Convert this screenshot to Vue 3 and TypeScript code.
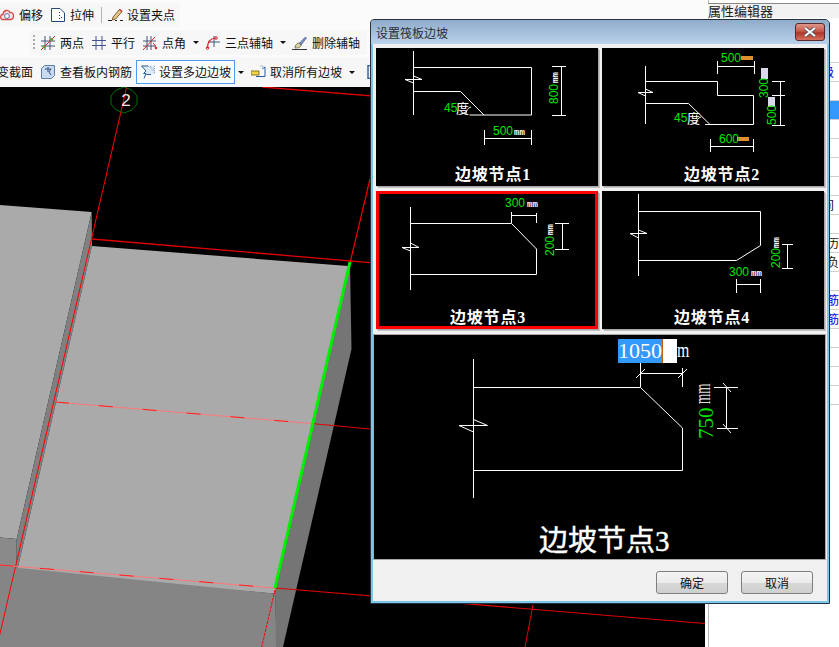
<script setup lang="ts">
interface Label { x: number; y: number; t: string; c: string; rot?: boolean }
interface Panel { title: string; tx: number; sel?: boolean; d: string; labels: Label[]; extra?: string; extraRot?: string }

const panels: Panel[] = [
  {
    title: '边坡节点1', tx: 79,
    d: 'M37.5 3V67M37.5 19.5H155.5V67H93.5M37.5 43.5H84.5L108 67M29 31.5H46L37.5 28M29 31.5L37.5 35M176 18.5H190M176 67.5H190M185.5 18.5V67.5M108.5 82V97M155.5 82V97M108.5 90.5H155.5M90 67C90 62 92 60 95 59',
    labels: [
      { x: 68, y: 64, t: '45', c: 'g' }, { x: 80, y: 65, t: '度', c: 'w' },
      { x: 117, y: 87, t: '500', c: 'g' }, { x: 138, y: 87, t: 'mm', c: 'm' },
      { x: 182, y: 56, t: '800', c: 'g', rot: true }, { x: 182, y: 35, t: 'mm', c: 'm', rot: true },
    ],
  },
  {
    title: '边坡节点2', tx: 82,
    d: 'M43.5 18V76M43.5 33.5H115.5V47.5H151.5V76.5H103M43.5 55.5H86.5L108 76.5M36 44.5H51L43.5 41M36 44.5L43.5 48M115.5 13V26M152.5 13V26M115.5 18.5H152.5M170 33.5H183M170 47.5H183M170 77.5H183M178.5 33.5V77.5M108.5 91V104M151.5 91V104M108.5 98.5H151.5M94 76C94 72 96 70 99 69',
    labels: [
      { x: 72, y: 74, t: '45', c: 'g' }, { x: 85, y: 75, t: '度', c: 'w' },
      { x: 119, y: 14, t: '500', c: 'g' }, { x: 117, y: 95, t: '600', c: 'g' },
      { x: 166, y: 50, t: '300', c: 'g', rot: true }, { x: 174, y: 77, t: '500', c: 'g', rot: true },
    ],
    extra: 'M139 8h12v4h-12zM135 89h12v4h-12z',
    extraRot: 'M159 20h7v11h-7zM166 49h7v10h-7z',
  },
  {
    title: '边坡节点3', tx: 74, sel: true,
    d: 'M34.5 16V99M34.5 32.5H135.5L160.5 58V83.5H34.5M135.5 21V32M160.5 22V32M135.5 24.5H160.5M179 32.5H193M179 58.5H193M186.5 32.5V58.5M26 56.5H43L34.5 52M26 56.5L34.5 60',
    labels: [
      { x: 129, y: 16, t: '300', c: 'g' }, { x: 151, y: 16, t: 'mm', c: 'm' },
      { x: 178, y: 65, t: '200', c: 'g', rot: true }, { x: 177, y: 44, t: 'mm', c: 'm', rot: true },
    ],
  },
  {
    title: '边坡节点4', tx: 72,
    d: 'M36.5 3V85M36.5 20.5H158.5V54.5L134.5 69.5H36.5M28 42.5H45L36.5 39M28 42.5L36.5 47M134.5 88V102M158.5 88V102M134.5 93.5H158.5M180 53.5H191M180 77.5H191M185.5 53.5V77.5',
    labels: [
      { x: 127, y: 85, t: '300', c: 'g' }, { x: 149, y: 85, t: 'mm', c: 'm' },
      { x: 178, y: 77, t: '200', c: 'g', rot: true }, { x: 177, y: 57, t: 'mm', c: 'm', rot: true },
    ],
  },
];

const props = [
  { t: '' }, { t: '级', cls: 'blue' }, { t: '' }, { t: '', cls: 'hl' }, { t: '' }, { t: ')', cls: 'near' }, { t: '' }, { t: '' },
  { t: '间' }, { t: '' }, { t: '历', cls: 'far' }, { t: '负', cls: 'far' }, { t: '' },
  { t: '筋', cls: 'blue far' }, { t: '筋', cls: 'blue far' }, { t: '' }, { t: '' }, { t: '' }, { t: '' },
];
</script>

<template>
  <div class="page">
    <div class="left">
      <header class="toolbar">
        <div class="row r1">
          <span class="tool">
            <svg viewBox="0 0 14 14" class="ic"><path d="M2 11.5C-.5 10 .5 6.5 3 6.5 3.5 2 8.500 1 9.800 4.500c2.500-.5 4 1.500 3.700 4-.3 2-1.500 3-3 3z" fill="#fbe3e0" stroke="#d8474a" stroke-width="1.300"/><circle cx="7" cy="8" r="2.400" fill="#fff" stroke="#4a6fa8"/></svg>
            偏移
          </span>
          <span class="tool">
            <svg viewBox="0 0 14 14" class="ic"><path d="M.5.500H9L13.500 5V13.500H.5z" fill="#fff" stroke="#24477c"/><path d="M8.500 4v1M8.500 7v1M10.500 9v1M8.500 10v1" stroke="#333"/></svg>
            拉伸
          </span>
          <i class="sep"></i>
          <span class="tool t4">
            <svg viewBox="0 0 15 14" class="ic w15"><path d="M0 12.500h4M7 12.500h2M12 12.500h3" stroke="#222"/><path d="M5 9L11.500 1.500 14 3.500 7.500 11 4.500 12z" fill="#e9c98a" stroke="#7a5a2a"/><path d="M11.500 1.500L14 3.500" stroke="#c33" stroke-width="1.500"/></svg>
            设置夹点
          </span>
        </div>
        <div class="row r2">
          <i class="grip"></i>
          <span class="tool">
            <svg viewBox="0 0 14 14" class="ic"><path d="M4 0V14M9 0V14M0 5H14M0 10H14" stroke="#44557f"/><path d="M0 14L14 0" stroke="#d22"/><circle cx="3" cy="11" r="1.600" fill="#6a9a2a"/><circle cx="10.500" cy="3.500" r="1.600" fill="#6a9a2a"/></svg>
            两点
          </span>
          <span class="tool">
            <svg viewBox="0 0 14 14" class="ic"><path d="M4 0V14M10 0V14M0 4.500H14M0 9.500H14" stroke="#44508f"/></svg>
            平行
          </span>
          <span class="tool t4">
            <svg viewBox="0 0 15 14" class="ic w15"><path d="M4 0V14M8 0V14M0 5H13M0 10H13" stroke="#44557f"/><path d="M0 14L12 1" stroke="#d22"/><path d="M10 7c1.500 1 2.500 3 2.500 6" stroke="#d22" fill="none"/><circle cx="13" cy="12" r="1.200" fill="#d22"/></svg>
            点角
          </span>
          <i class="caret"></i>
          <span class="tool">
            <svg viewBox="0 0 15 14" class="ic w15"><path d="M9 0V11M3 6H15" stroke="#44557f"/><path d="M2.500 12C2.500 6 5 2.500 10.500 2" stroke="#d22" fill="none" stroke-width="1.200"/><circle cx="2.500" cy="12" r="1.300" fill="none" stroke="#d22"/><circle cx="11" cy="2" r="1.300" fill="none" stroke="#d22"/></svg>
            三点辅轴
          </span>
          <i class="caret"></i>
          <span class="tool">
            <svg viewBox="0 0 15 14" class="ic w15"><path d="M0 13.500h15" stroke="#333"/><path d="M3 12c0-3 2-5 4-5l2 2c0 2-2 3-6 3z" fill="#d9d2a8" stroke="#7f7a50"/><path d="M7.500 7L13.500 1l1 1L9 9z" fill="#7a8fc4" stroke="#4a5a8c" stroke-width=".7"/></svg>
            删除辅轴
          </span>
        </div>
        <div class="row r3">
          <span class="plain cut">变截面</span>
          <span class="tool">
            <svg viewBox="0 0 14 14" class="ic"><path d="M.5 3.500L3.500.5H13.500V10.500L10.500 13.500H.5z" fill="#c8daf0" stroke="#5e80ac"/><path d="M4 4h6l-2 3 2 3M7 2v5" stroke="#34507c" fill="none"/></svg>
            查看板内钢筋
          </span>
          <span class="tool active">
            <svg viewBox="0 0 14 14" class="ic"><path d="M0 .5L5 5.500 2.500 8.500 4 9 3 13.500 5.500 9.500H13.500V.5z" fill="#dfeaf7"/><path d="M.5 1L5 6 2.500 8.500H5L3 13.500M.5 1H7M5.500 9.500H10" fill="none" stroke="#2a5a9a"/><path d="M7 1l6.500 6M9 1l4.500 4M13.500 1v8" fill="none" stroke="#7f9fc8" stroke-dasharray="1 1"/></svg>
            设置多边边坡
          </span>
          <i class="caret c3"></i>
          <span class="tool t4">
            <svg viewBox="0 0 15 14" class="ic w15"><path d="M0 6h8v4H0z" fill="#f0d24a" stroke="#8a7a20"/><path d="M5 11.500H14V2L11 4" fill="none" stroke="#2a5a9a"/><path d="M9 1h3v3" stroke="#a8bcd8" fill="none"/></svg>
            取消所有边坡
          </span>
          <i class="caret c4"></i>
          <svg viewBox="0 0 8 14" class="ic w8"><path d="M5 .5H1V13.500H7" fill="none" stroke="#2a5a9a" stroke-width="1.400"/></svg>
        </div>
      </header>
      <svg class="canvas" viewBox="0 87 705 560">
        <polygon points="0,205 91.700,212 16.700,539 0,537.500" fill="#aaaaaa"/>
        <polygon points="91.700,212 92,246 16.700,572.600 16.700,539" fill="#808080"/>
        <polygon points="0,537.500 16.700,539 16.700,572.600 0,566" fill="#8a8a8a"/>
        <polygon points="92,246 348.300,266 275,593.600 16.700,572.600" fill="#aaaaaa"/>
        <polygon points="0,566 275,593.600 277,647 0,647" fill="#858585"/>
        <polygon points="350,264 351.500,349 283,647 276,647 275,593.600" fill="#757575"/>
        <line x1="126.700" y1="87" x2="-1.500" y2="640" stroke="#ff0000"/>
        <line x1="92" y1="239" x2="370" y2="262.600" stroke="#e00000" stroke-width="1.300"/>
        <line x1="262" y1="87" x2="705" y2="123" stroke="#e00000" stroke-width="1.300"/>
        <line x1="370" y1="179" x2="350" y2="263" stroke="#ee0000" stroke-width="1.200"/>
        <line x1="275" y1="590" x2="261.700" y2="647" stroke="#ff0000" stroke-dasharray="3 1"/>
        <line x1="55" y1="402" x2="312.700" y2="423.600" stroke="#ff7777"/>
        <line x1="55" y1="402" x2="312.700" y2="423.600" stroke="#ff2020" stroke-dasharray="14 30"/>
        <line x1="312.700" y1="423.600" x2="370" y2="429" stroke="#e00000"/>
        <line x1="0" y1="565" x2="275" y2="588" stroke="#ff7777"/>
        <line x1="0" y1="565" x2="275" y2="588" stroke="#ff2020" stroke-dasharray="14 26"/>
        <line x1="275" y1="588" x2="705" y2="623.500" stroke="#e00000" stroke-width="1.200"/>
        <line x1="533" y1="605" x2="525" y2="647" stroke="#dd0000"/>
        <line x1="350" y1="262" x2="275" y2="588" stroke="#00f000" stroke-width="3"/>
        <polygon points="124,87 132,90 137,96 137,104 132,110 124,113 116,110 111,104 111,96 116,90" fill="none" stroke="#006e00"/>
        <text x="126" y="106" class="axis">2</text>
      </svg>
    </div>
    <i class="split"></i>
    <aside class="props">
      <div class="props-head">属性编辑器</div>
      <div class="props-rows">
        <div v-for="(p, i) in props" :key="i" class="prop" :class="p.cls">{{ p.t }}</div>
      </div>
    </aside>

    <section class="dialog">
      <div class="titlebar">
        <span>设置筏板边坡</span>
        <button class="close" type="button">
          <svg viewBox="0 0 14 10" width="14" height="10"><path d="M2 1l10 8M12 1L2 9" stroke="#50585f" stroke-width="3.600"/><path d="M2 1l10 8M12 1L2 9" stroke="#fff" stroke-width="2"/></svg>
        </button>
      </div>
      <div class="body">
        <div class="grid">
          <div v-for="p in panels" :key="p.title" class="panel" :class="{ sel: p.sel }">
            <svg viewBox="0 0 222 138" class="draw">
              <path :d="p.d" class="ln"/>
              <path v-if="p.extra" :d="p.extra" fill="#e0902c"/>
              <path v-if="p.extraRot" :d="p.extraRot" fill="#d8d8e8"/>
              <text
                v-for="l in p.labels"
                :key="l.t + l.x"
                :x="l.x"
                :y="l.y"
                :class="l.c"
                :transform="l.rot ? `rotate(-90 ${l.x} ${l.y})` : undefined"
              >{{ l.t }}</text>
              <text :x="p.tx" y="132" class="ttl">{{ p.title }}</text>
            </svg>
          </div>
        </div>
        <div class="large">
          <svg viewBox="0 0 451 224" class="draw">
            <path class="ln" d="M99.500 24V163M99.500 52.500H266.500L308.500 93V135.500H99.500M85 90.500H113.500L99.500 84.500M85 90.500L99.500 97M266.500 27V52M308.500 33V52M266.500 38.500H308.500M262 43L271 34M304 43L313 34M340 52.500H364M343 93.500H364M352.500 52.500V93.500M349 48L357 57M349 89L357 98"/>
            <text class="big-m" transform="translate(303 22) scale(.72 1)">m</text>
            <text x="339" y="104" class="big-g" transform="rotate(-90 339 104)">750</text>
            <text class="big-w" transform="translate(336 69) rotate(-90) scale(.55 1)">mm</text>
            <text x="165" y="216" class="big-t">边坡节点3</text>
          </svg>
          <div class="edit"><span class="selected">1050</span></div>
        </div>
        <footer class="foot">
          <button type="button" class="btn">确定</button>
          <button type="button" class="btn">取消</button>
        </footer>
      </div>
    </section>
  </div>
</template>

<style>
html, body { margin: 0; background: #fff; }
</style>

<style scoped>
.page {
  position: relative; width: 839px; height: 647px; overflow: hidden; display: flex;
  font-family: "Noto Sans CJK SC", "Liberation Sans", sans-serif; font-size: 12px; color: #111; background: #fff;
}
.left { width: 705px; flex: none; display: flex; flex-direction: column; }
.toolbar { height: 87px; flex: none; background: #fbfbfb; padding-top: 3px; box-sizing: border-box; }
.row { display: flex; align-items: center; gap: 8px; overflow: hidden; white-space: nowrap; background: #f7f7f7; box-sizing: border-box; }
.r1 { width: 180px; height: 24px; }
.r2 { width: 337px; height: 25px; margin: 3px 0 0 30px; padding-left: 3px; }
.r3 { height: 30px; margin-top: 2px; }
.tool { display: inline-flex; align-items: center; gap: 5px; line-height: 14px; }
.t4 { gap: 4px; }
.plain { line-height: 14px; }
.cut { margin-left: -3px; }
.ic { width: 14px; height: 14px; flex: none; }
.w15 { width: 15px; }
.w8 { width: 8px; margin-left: 3px; }
.sep { width: 1px; height: 16px; background: #b5b5b5; margin: 0 -2px 0 -1px; }
.grip { width: 2px; height: 16px; margin-right: -2px; background: repeating-linear-gradient(#aaa 0 2px, transparent 2px 4px); }
.caret { width: 0; height: 0; margin: 0 -2px 0 -1px; border: 3px solid transparent; border-top: 3px solid #111; border-bottom: 0; }
.active { gap: 4px; margin-left: -4px; padding: 0 3px 0 4px; border: 1px solid #4a9df0; background: #fafcff; height: 22px; }
.c3 { margin-left: -5px; margin-right: -1px; }
.c4 { margin-left: -1px; margin-right: 1px; }
.canvas { width: 705px; height: 560px; display: block; background: #000; }
.axis { font: 17px "Liberation Sans", sans-serif; fill: #e8e8e8; text-anchor: middle; }
.split { width: 3px; flex: none; border-right: 1px solid #b8b8b8; background: #fff; }
.props { flex: 1; min-width: 0; }
.props-head {
  height: 14px; margin: 3px 0 0 -1px; border-top: 1px solid #888; line-height: 14px; font-size: 13px; color: #222;
  background: #f2f2f2; white-space: nowrap;
}
.props-rows { margin-top: 26px; }
.prop {
  height: 19px; line-height: 18px; padding-left: 113px; border-bottom: 1px solid #cfcfcf; box-sizing: border-box;
  overflow: hidden; white-space: nowrap; color: #111;
}
.blue { color: #0000ee; }
.hl { background: #3399ff; }
.far { padding-left: 118px; }
.near { padding-left: 117px; }

.dialog {
  position: absolute; left: 370px; top: 19px; width: 460px; height: 585px; box-sizing: border-box;
  border: 1px solid #26333c; border-radius: 4px 5px 0 0; background: #7cc6ea; padding: 0 2px 2px; display: flex; flex-direction: column;
}
.titlebar {
  height: 24px; flex: none; margin: 0 -2px; padding: 0 4px 0 5px; display: flex; align-items: center; justify-content: space-between;
  background: linear-gradient(#8facca, #b9d2ec); color: #2a2f36; border-radius: 3px 4px 0 0;
}
.close {
  width: 30px; height: 18px; padding: 0; border: 1px solid #5a2a2a; border-radius: 3px;
  background: linear-gradient(#e0968a 0, #c85a4a 45%, #b0352a 55%, #d4705e 100%); display: flex; align-items: center; justify-content: center;
}
.body { flex: 1; background: #f0f0f0; display: flex; flex-direction: column; min-height: 0; }
.grid { margin: 4px 3px 0; display: grid; grid-template-columns: 222px 222px; grid-template-rows: 138px 138px; column-gap: 4px; row-gap: 5px; }
.panel { background: #000; box-shadow: 1px 1px 0 #a8a8a8, 2px 2px 0 #c4c4c4; position: relative; overflow: hidden; }
.panel.sel::after { content: ""; position: absolute; inset: 0; border: 3px solid #ff0000; }
.draw { display: block; width: 100%; height: 100%; }
.ln { fill: none; stroke: #fff; stroke-width: 1; }
.g { font: 12px "Liberation Sans", sans-serif; fill: #00e600; }
.w { font: 13px "Noto Sans CJK SC", sans-serif; fill: #fff; }
.m { font: 700 9px "Liberation Mono", monospace; fill: #fff; }
.ttl { font: 700 16px "Liberation Serif", "Noto Sans CJK SC", serif; fill: #fff; letter-spacing: .8px; }
.large {
  position: relative; width: 451px; height: 224px; margin-top: 5px; border: 1px solid #a8a8a8; background: #000; flex: none;
}
.big-m { font: 22px "Liberation Serif", serif; fill: #fff; }
.big-g { font: 21px "Liberation Serif", serif; fill: #00e600; }
.big-w { font: 24px "Liberation Serif", serif; fill: #ddd; }
.big-t { font: 400 29px "Liberation Serif", "Noto Sans CJK SC", serif; fill: #fff; stroke: #fff; stroke-width: .4px; }
.edit { position: absolute; left: 244px; top: 4px; width: 59px; height: 24px; background: #fff; font: 22px/24px "Liberation Serif", serif; overflow: hidden; }
.selected { display: inline-block; width: 44px; height: 24px; background: #3399ff; color: #fff; border-right: 1px solid #c06000; }
.foot { flex: 1; display: flex; justify-content: flex-end; align-items: flex-start; gap: 13px; padding: 11px 14px 0 0; }
.btn {
  width: 72px; height: 23px; padding: 0; border: 1px solid #7f7f7f; border-radius: 3px; font: 12px "Noto Sans CJK SC", sans-serif; color: #111;
  background: linear-gradient(#f4f4f4 0, #ebebeb 50%, #d8d8d8 52%, #cfcfcf 100%);
}
</style>
